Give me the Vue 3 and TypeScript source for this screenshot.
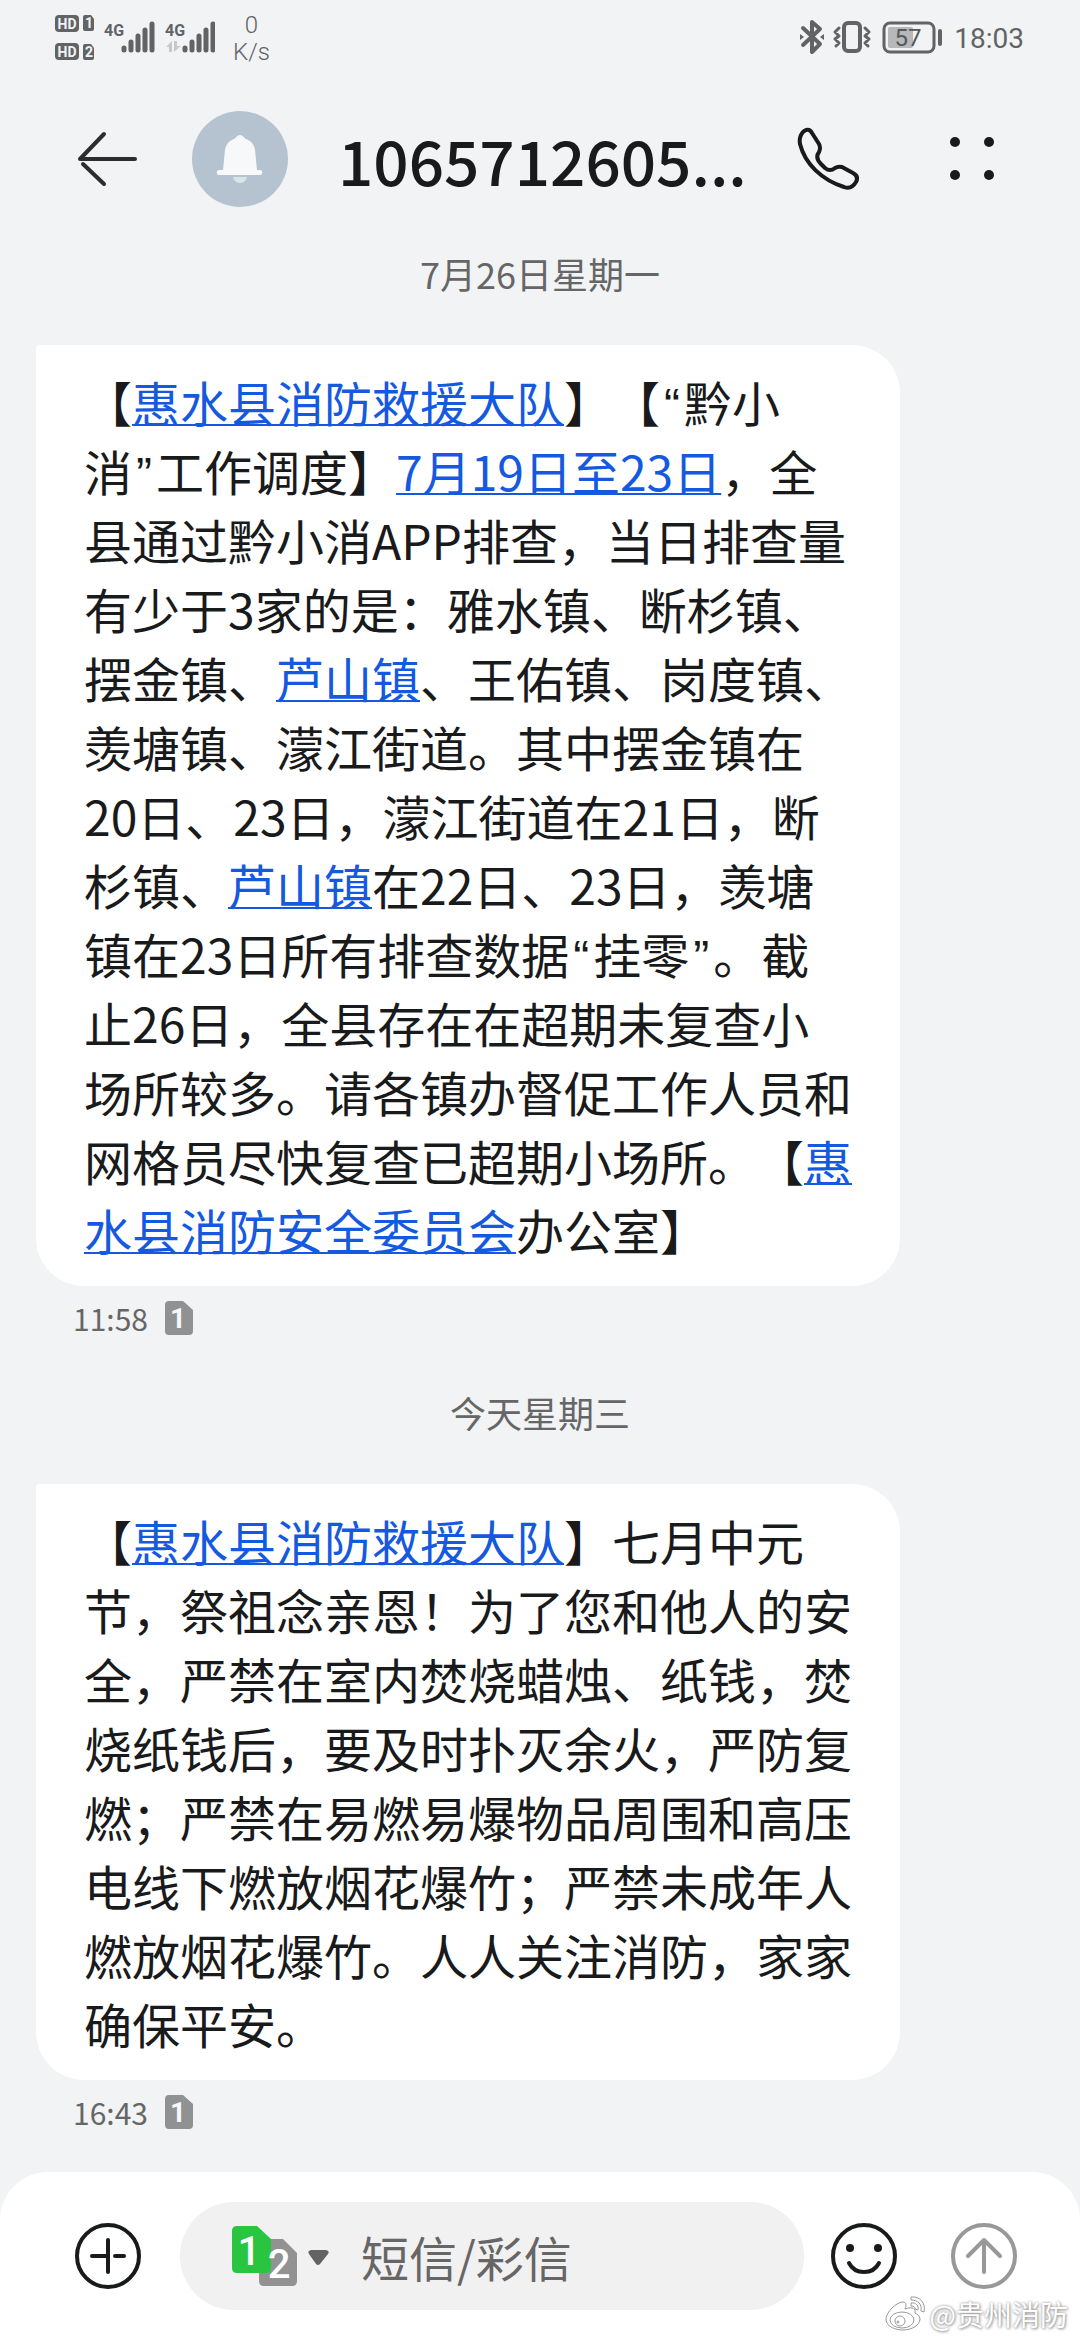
<script setup lang="ts">
import { ref } from 'vue'

interface Segment {
  text: string
  kind?: 'link' | 'quote'
}

interface Message {
  id: number
  date: string
  time: string
  lines: Segment[][]
}

const title = '1065712605...'
const draft = ref('')

const t = (text: string): Segment => ({ text })
const link = (text: string): Segment => ({ text, kind: 'link' })
const quote = (text: string): Segment => ({ text, kind: 'quote' })

const messages: Message[] = [
  {
    id: 1,
    date: '7月26日星期一',
    time: '11:58',
    lines: [
      [t('【'), link('惠水县消防救援大队'), t('】【'), quote('“'), t('黔小')],
      [t('消'), quote('”'), t('工作调度】'), link('7月19日至23日'), t('，全')],
      [t('县通过黔小消APP排查，当日排查量')],
      [t('有少于3家的是：雅水镇、断杉镇、')],
      [t('摆金镇、'), link('芦山镇'), t('、王佑镇、岗度镇、')],
      [t('羡塘镇、濛江街道。其中摆金镇在')],
      [t('20日、23日，濛江街道在21日，断')],
      [t('杉镇、'), link('芦山镇'), t('在22日、23日，羡塘')],
      [t('镇在23日所有排查数据'), quote('“'), t('挂零'), quote('”'), t('。截')],
      [t('止26日，全县存在在超期未复查小')],
      [t('场所较多。请各镇办督促工作人员和')],
      [t('网格员尽快复查已超期小场所。【'), link('惠')],
      [link('水县消防安全委员会'), t('办公室】')],
    ],
  },
  {
    id: 2,
    date: '今天星期三',
    time: '16:43',
    lines: [
      [t('【'), link('惠水县消防救援大队'), t('】七月中元')],
      [t('节，祭祖念亲恩！为了您和他人的安')],
      [t('全，严禁在室内焚烧蜡烛、纸钱，焚')],
      [t('烧纸钱后，要及时扑灭余火，严防复')],
      [t('燃；严禁在易燃易爆物品周围和高压')],
      [t('电线下燃放烟花爆竹；严禁未成年人')],
      [t('燃放烟花爆竹。人人关注消防，家家')],
      [t('确保平安。')],
    ],
  },
]
</script>

<template>
  <div class="screen">
    <div class="status">
      <svg class="glyph" width="42" height="72" viewBox="55 0 42 72" aria-hidden="true">
        <g fill="#616365">
          <rect x="55" y="15" width="24" height="17" rx="4" />
          <rect x="55" y="43" width="24" height="17" rx="4" />
          <path d="M85 15h6l3 4v10q0 2-2 2h-7q-2 0-2-2V17q0-2 2-2zM85 44h6l3 4v10q0 2-2 2h-7q-2 0-2-2V46q0-2 2-2z" />
        </g>
        <g class="tiny" fill="#f1f3f5" text-anchor="middle">
          <text x="67" y="29">HD</text>
          <text x="67" y="57">HD</text>
          <text x="89" y="28">1</text>
          <text x="89" y="57">2</text>
        </g>
      </svg>
      <svg class="glyph" width="118" height="72" viewBox="97 0 118 72" aria-hidden="true">
        <g stroke="#616365" stroke-width="5" stroke-linecap="round">
          <path d="M124 48v2M131 42v8M138 36v14M145 30v20M152 24v26" />
          <path d="M185 48v2M192 42v8M199 36v14M206 30v20M213 24v26" />
        </g>
        <path d="M166 47l6-6v11h-3v-5zM174 41h3v5h4l-7 6z" fill="#c6c8ca" />
        <g class="net" fill="#616365">
          <text x="104" y="36">4G</text>
          <text x="165" y="36">4G</text>
        </g>
      </svg>
      <div class="speed"><span>0</span><span>K/s</span></div>
      <div class="spacer"></div>
      <svg class="glyph" width="146" height="72" viewBox="798 0 146 72" aria-hidden="true">
        <g fill="none" stroke="#616365" stroke-width="4" stroke-linecap="round" stroke-linejoin="round">
          <path d="M803 28l17 16-8 8V22l8 7-17 16" />
          <rect x="844" y="23" width="16" height="28" rx="4" />
          <path d="M839 28l-4 4 4 4-4 3 4 4-3 3M865 28l4 4-4 4 4 3-4 4 3 3" stroke-width="3" />
          <rect x="884" y="23" width="50" height="29" rx="6" stroke-width="3" />
          <path d="M940 31v13" />
        </g>
        <path d="M800 34l4 3-4 3zM824 34l-4 3 4 3z" fill="#616365" />
        <rect x="888" y="27" width="25" height="21" rx="2" fill="#b7b8ba" />
        <text class="charge" x="908" y="46" text-anchor="middle" fill="#555759">57</text>
      </svg>
      <time class="clock">18:03</time>
    </div>

    <header class="header">
      <button class="icon" type="button" aria-label="返回">
        <svg width="66" height="66" viewBox="0 0 66 66" fill="none" stroke="#2b2d2f" stroke-width="4" stroke-linecap="round">
          <path d="M60 33H5L29 8" stroke-linejoin="round" />
          <path d="M8 38l21 20" />
        </svg>
      </button>
      <svg class="avatar" width="96" height="96" viewBox="0 0 96 96" aria-hidden="true">
        <circle cx="48" cy="48" r="48" fill="#b5c3d0" />
        <path d="M41 66h14c-1 4-4 6-7 6s-6-2-7-6z" fill="#dbe2e8" />
        <path d="M31 59L33 39c1-6 4-9 9-11 2-1 3-4 6-4s4 3 6 4c5 2 8 5 9 11l2 20h3c3 0 3 5 0 5H27c-3 0-3-5 0-5z" fill="#f6f8fa" />
      </svg>
      <h1 class="title">{{ title }}</h1>
      <button class="icon" type="button" aria-label="拨打电话">
        <svg width="66" height="66" viewBox="0 0 66 66" fill="none" stroke="#191a1b" stroke-width="4" stroke-linejoin="round">
          <path d="M17 7L24 18Q26 22 24 26C21 30 22 34 26 38L30 42Q35 46 40 42Q43 40 47 41L58 47C62 49 63 52 61 56C58 61 54 63 49 61C27 54 10 38 5 18C4 12 6 6 11 4Q15 3 17 7Z" />
        </svg>
      </button>
      <button class="icon" type="button" aria-label="更多">
        <svg width="66" height="66" viewBox="0 0 66 66" fill="#191a1b">
          <circle cx="16" cy="16" r="5" /><circle cx="50" cy="16" r="5" />
          <circle cx="16" cy="49" r="5" /><circle cx="50" cy="49" r="5" />
        </svg>
      </button>
    </header>

    <main class="thread">
      <section v-for="m in messages" :key="m.id" class="group">
        <p class="date">{{ m.date }}</p>
        <div class="bubble">
          <p v-for="(line, i) in m.lines" :key="i" class="line">
            <template v-for="(s, j) in line" :key="j">
              <a v-if="s.kind === 'link'" class="link" href="#">{{ s.text }}</a>
              <span v-else :class="s.kind">{{ s.text }}</span>
            </template>
          </p>
        </div>
        <div class="meta">
          <time>{{ m.time }}</time>
          <svg width="28" height="34" viewBox="0 0 28 34" aria-label="卡1">
            <path d="M4 0h14l10 9v21q0 4-4 4H4q-4 0-4-4V4q0-4 4-4z" fill="#8f9193" />
            <text class="sim-small" x="13" y="27" text-anchor="middle" fill="#f6f7f8">1</text>
          </svg>
        </div>
      </section>
    </main>

    <footer class="compose">
      <button class="icon" type="button" aria-label="添加">
        <svg width="66" height="66" viewBox="0 0 66 66" fill="none" stroke="#191a1b" stroke-width="4" stroke-linecap="round">
          <circle cx="33" cy="33" r="31" />
          <path d="M33 17v32M17 33h16M40 33h9" />
        </svg>
      </button>
      <div class="field">
        <button class="sim" type="button" aria-label="选择发送卡">
          <svg width="98" height="76" viewBox="0 -8 98 76">
            <path d="M32 13h19l14 14v28q0 5-5 5H32q-5 0-5-5V18q0-5 5-5z" fill="#929292" />
            <path d="M5 0h20l14 13v29q0 5-5 5H5q-5 0-5-5V5q0-5 5-5z" fill="#29c540" />
            <text x="17" y="39" text-anchor="middle" fill="#fff">1</text>
            <text x="47" y="52" text-anchor="middle" fill="#fff">2</text>
            <path d="M79 24h15q4 1 2 4l-8 10q-2 2-4 0l-7-10q-2-3 2-4z" fill="#636363" />
          </svg>
        </button>
        <input v-model="draft" class="input" type="text" placeholder="短信/彩信" aria-label="短信/彩信" />
      </div>
      <button class="icon" type="button" aria-label="表情">
        <svg width="66" height="66" viewBox="0 0 66 66" fill="none" stroke="#191a1b" stroke-width="4" stroke-linecap="round">
          <circle cx="33" cy="33" r="31" />
          <path d="M18 40c6 12 24 12 30 0" />
          <g fill="#191a1b" stroke="none"><circle cx="19" cy="25" r="4" /><circle cx="47" cy="25" r="4" /></g>
        </svg>
      </button>
      <button class="icon" type="button" aria-label="发送">
        <svg width="66" height="66" viewBox="0 0 66 66" fill="none" stroke="#989898" stroke-width="4" stroke-linecap="round" stroke-linejoin="round">
          <circle cx="33" cy="33" r="31" />
          <path d="M33 49V17M17 33l16-16 16 16" />
        </svg>
      </button>
      <div class="watermark">
        <svg width="42" height="36" viewBox="0 0 42 36" fill="#fff" stroke="#999" stroke-width="1" aria-hidden="true">
          <path d="M20 6C13 5 1 17 2 24C3 31 12 34 19 34C28 34 36 29 36 23C36 20 33 18 31 17C32 13 29 10 21 13C22 11 23 7 20 6Z" />
          <ellipse cx="18" cy="24" rx="12" ry="8" />
          <circle cx="16" cy="25" r="5" />
          <circle cx="14" cy="26" r="1" />
          <path d="M27 1C36 0 42 7 40 16L37 15C38 8 34 4 27 4ZM27 7C32 6 35 10 34 14L31 13C31 11 30 10 27 10Z" />
        </svg>
        <span>@贵州消防</span>
      </div>
    </footer>
  </div>
</template>

<style>
body {
  background: #f1f3f5;
}
</style>

<style scoped>
.screen {
  display: flex;
  flex-direction: column;
  min-height: 100vh;
  background: #f1f3f5;
  color: #191a1b;
  font-family: "Noto Sans CJK SC", "Noto Sans", sans-serif;
  text-spacing-trim: space-all;
  text-autospace: no-autospace;
}

p,
h1 {
  margin: 0;
}

button {
  display: flex;
  align-items: center;
  justify-content: center;
  padding: 0;
  border: 0;
  background: none;
}

.status {
  display: flex;
  align-items: center;
  height: 72px;
  padding: 0 56px 0 55px;
  color: #616365;
  font-family: Roboto, sans-serif;
}

.glyph {
  display: block;
}

.tiny {
  font-size: 14px;
  font-weight: 700;
}

.net {
  font-size: 16px;
  font-weight: 700;
}

.charge {
  font-size: 24px;
}

.speed {
  display: flex;
  flex-direction: column;
  align-items: center;
  margin-left: 18px;
  padding-top: 6px;
  font-size: 24px;
  font-weight: 300;
  line-height: 27px;
}

.spacer {
  flex: 1;
}

.clock {
  margin-left: 10px;
  padding-top: 4px;
  font-size: 28px;
}

.header {
  display: flex;
  align-items: center;
  height: 174px;
  padding: 0 48px;
}

.icon {
  flex: none;
  width: 120px;
  height: 108px;
}

.avatar {
  flex: none;
  margin: 0 50px 0 24px;
}

.title {
  flex: 1;
  min-width: 0;
  overflow: hidden;
  font-size: 62px;
  font-weight: 500;
  line-height: 88px;
  white-space: nowrap;
}

.title + .icon {
  margin-right: 24px;
}

.thread {
  flex: 1;
}

.group + .group {
  padding-top: 49px;
}

.date {
  margin-bottom: 45px;
  color: #666;
  font-size: 36px;
  line-height: 54px;
  text-align: center;
}

.bubble {
  width: 80%;
  box-sizing: border-box;
  margin-left: 36px;
  padding: 22px 48px;
  border-radius: 4px 48px 48px 48px;
  background: #fff;
  font-size: 48px;
  line-height: 69px;
}

.line {
  white-space: nowrap;
}

.link {
  color: #1459e0;
  text-decoration: underline;
  text-decoration-skip-ink: none;
  text-decoration-thickness: 2px;
  text-underline-offset: 2px;
}

.quote {
  padding: 0 4px;
  font-family: "Liberation Sans", sans-serif;
  line-height: 1;
}

.meta {
  display: flex;
  align-items: center;
  gap: 17px;
  height: 36px;
  margin-top: 14px;
  padding-left: 73px;
  color: #666;
  font-size: 30px;
  line-height: 36px;
}

.sim-small {
  font-family: Roboto, sans-serif;
  font-size: 28px;
  font-weight: 700;
}

.compose {
  position: relative;
  display: flex;
  align-items: center;
  padding: 30px 36px 30px 48px;
  border-radius: 48px 48px 0 0;
  background: #fff;
}

.field {
  display: flex;
  flex: 1;
  align-items: center;
  min-width: 0;
  height: 108px;
  margin-left: 12px;
  box-sizing: border-box;
  padding: 0 48px 0 52px;
  border-radius: 54px;
  background: #f1f1f1;
}

.sim {
  flex: none;
  font-family: Roboto, sans-serif;
  font-size: 40px;
  font-weight: 500;
}

.input {
  flex: 1;
  min-width: 0;
  margin-left: 31px;
  padding: 0;
  border: 0;
  outline: 0;
  background: none;
  color: #191a1b;
  font-family: inherit;
  font-size: 48px;
  line-height: 72px;
}

.input::placeholder {
  color: #666;
  opacity: 1;
}

.watermark {
  position: absolute;
  right: 12px;
  bottom: 6px;
  display: flex;
  align-items: center;
  gap: 4px;
  color: #fff;
  font-size: 28px;
  line-height: 40px;
  text-shadow: 0 0 3px #999, 1px 1px 3px #999;
}
</style>
